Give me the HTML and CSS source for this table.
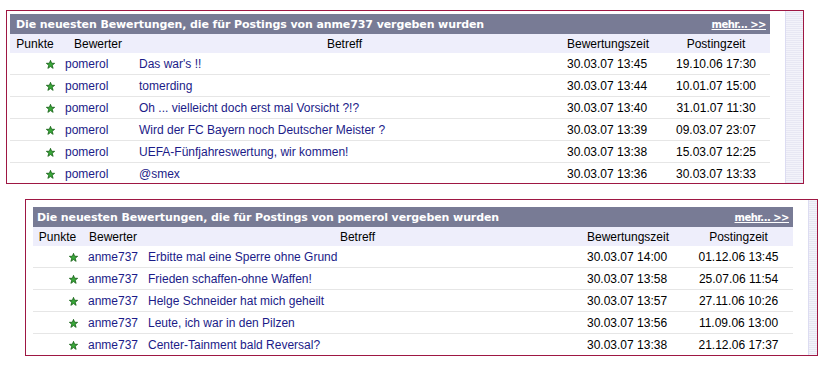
FILE: index.html
```html
<!DOCTYPE html>
<html lang="de">
<head>
<meta charset="utf-8">
<title>Bewertungen</title>
<link rel="stylesheet" href="styles.css">
</head>
<body>
<svg width="0" height="0" class="defs">
  <defs>
    <symbol id="star" viewBox="0 0 10 10">
      <polygon points="5,0.4 6.2,3.6 9.6,3.7 6.9,5.8 7.9,9.3 5,7.3 2.1,9.3 3.1,5.8 0.4,3.7 3.8,3.6" fill="#39a839" stroke="#155f15" stroke-width="0.9" stroke-linejoin="round"/>
    </symbol>
  </defs>
</svg>

<div class="box box-a">
  <div class="panel">
    <div class="titlebar">
      <span class="title">Die neuesten Bewertungen, die für Postings von anme737 vergeben wurden</span>
      <a class="more" href="#">mehr... &gt;&gt;</a>
    </div>
    <table class="list">
      <colgroup>
        <col class="a-c1"><col class="a-c2"><col class="a-c3"><col class="a-c4"><col class="a-c5">
      </colgroup>
      <thead>
        <tr>
          <th class="h-pkt">Punkte</th>
          <th class="h-bew">Bewerter</th>
          <th class="h-betr">Betreff</th>
          <th class="h-zeit">Bewertungszeit</th>
          <th class="h-post">Postingzeit</th>
        </tr>
      </thead>
      <tbody>
        <tr><td class="pkt"><svg class="star"><use href="#star"/></svg></td><td class="user">pomerol</td><td class="subj">Das war's !!</td><td class="zeit">30.03.07 13:45</td><td class="post">19.10.06 17:30</td></tr>
        <tr><td class="pkt"><svg class="star"><use href="#star"/></svg></td><td class="user">pomerol</td><td class="subj">tomerding</td><td class="zeit">30.03.07 13:44</td><td class="post">10.01.07 15:00</td></tr>
        <tr><td class="pkt"><svg class="star"><use href="#star"/></svg></td><td class="user">pomerol</td><td class="subj">Oh ... vielleicht doch erst mal Vorsicht ?!?</td><td class="zeit">30.03.07 13:40</td><td class="post">31.01.07 11:30</td></tr>
        <tr><td class="pkt"><svg class="star"><use href="#star"/></svg></td><td class="user">pomerol</td><td class="subj">Wird der FC Bayern noch Deutscher Meister ?</td><td class="zeit">30.03.07 13:39</td><td class="post">09.03.07 23:07</td></tr>
        <tr><td class="pkt"><svg class="star"><use href="#star"/></svg></td><td class="user">pomerol</td><td class="subj">UEFA-Fünfjahreswertung, wir kommen!</td><td class="zeit">30.03.07 13:38</td><td class="post">15.03.07 12:25</td></tr>
        <tr><td class="pkt"><svg class="star"><use href="#star"/></svg></td><td class="user">pomerol</td><td class="subj">@smex</td><td class="zeit">30.03.07 13:36</td><td class="post">30.03.07 13:33</td></tr>
      </tbody>
    </table>
  </div>
  <div class="stripe"></div>
</div>

<div class="box box-b">
  <div class="panel">
    <div class="titlebar">
      <span class="title">Die neuesten Bewertungen, die für Postings von pomerol vergeben wurden</span>
      <a class="more" href="#">mehr... &gt;&gt;</a>
    </div>
    <table class="list">
      <colgroup>
        <col class="b-c1"><col class="b-c2"><col class="b-c3"><col class="b-c4"><col class="b-c5">
      </colgroup>
      <thead>
        <tr>
          <th class="h-pkt">Punkte</th>
          <th class="h-bew">Bewerter</th>
          <th class="h-betr">Betreff</th>
          <th class="h-zeit">Bewertungszeit</th>
          <th class="h-post">Postingzeit</th>
        </tr>
      </thead>
      <tbody>
        <tr><td class="pkt"><svg class="star"><use href="#star"/></svg></td><td class="user">anme737</td><td class="subj">Erbitte mal eine Sperre ohne Grund</td><td class="zeit">30.03.07 14:00</td><td class="post">01.12.06 13:45</td></tr>
        <tr><td class="pkt"><svg class="star"><use href="#star"/></svg></td><td class="user">anme737</td><td class="subj">Frieden schaffen-ohne Waffen!</td><td class="zeit">30.03.07 13:58</td><td class="post">25.07.06 11:54</td></tr>
        <tr><td class="pkt"><svg class="star"><use href="#star"/></svg></td><td class="user">anme737</td><td class="subj">Helge Schneider hat mich geheilt</td><td class="zeit">30.03.07 13:57</td><td class="post">27.11.06 10:26</td></tr>
        <tr><td class="pkt"><svg class="star"><use href="#star"/></svg></td><td class="user">anme737</td><td class="subj">Leute, ich war in den Pilzen</td><td class="zeit">30.03.07 13:56</td><td class="post">11.09.06 13:00</td></tr>
        <tr><td class="pkt"><svg class="star"><use href="#star"/></svg></td><td class="user">anme737</td><td class="subj">Center-Tainment bald Reversal?</td><td class="zeit">30.03.07 13:38</td><td class="post">21.12.06 17:37</td></tr>
      </tbody>
    </table>
  </div>
  <div class="stripe"></div>
</div>
</body>
</html>
```

FILE: styles.css
```css
html, body {
  margin: 0;
  padding: 0;
  background: #ffffff;
}
body {
  font-family: "Liberation Sans", Arial, sans-serif;
  font-size: 12px;
  color: #000;
}
.defs {
  position: absolute;
  width: 0;
  height: 0;
  overflow: hidden;
}

.box {
  display: flex;
  border: 1px solid #9e1743;
  box-sizing: border-box;
}
.box-a {
  margin: 10px 0 0 6px;
  width: 798px;
  height: 174px;
  padding-left: 3px;
}
.box-a .panel {
  margin-top: 3px;
}
.box-b {
  margin: 15px 0 0 25px;
  width: 793px;
  padding-left: 7px;
}
.box-b .panel {
  margin-top: 7px;
}

.panel {
  width: 760px;
  flex: none;
  overflow: hidden;
}
.stripe {
  margin-left: 15px;
  flex: 1;
  border-left: 1px solid #dcdcf2;
  background: repeating-linear-gradient(to bottom, #f3f3fa 0, #f3f3fa 1px, #e7e7f3 1px, #e7e7f3 2px);
}

.titlebar {
  display: flex;
  justify-content: space-between;
  align-items: center;
  height: 20px;
  background: #787b95;
  padding: 0 4px 0 6px;
  color: #fff;
  font-family: "DejaVu Sans", Verdana, sans-serif;
  font-weight: bold;
  font-size: 11px;
}
.box-b .titlebar {
  padding-left: 4px;
}
.title {
  white-space: nowrap;
  letter-spacing: -0.1px;
}
.more {
  color: #fff;
  text-decoration: underline;
  white-space: nowrap;
  font-size: 10px;
  letter-spacing: -0.5px;
}

.list {
  width: 760px;
  border-collapse: collapse;
  table-layout: fixed;
}
.a-c1 { width: 50px; }
.a-c2 { width: 76px; }
.a-c3 { width: 427px; }
.a-c4 { width: 99px; }
.a-c5 { width: 108px; }
.b-c1 { width: 49px; }
.b-c2 { width: 62px; }
.b-c3 { width: 439px; }
.b-c4 { width: 101px; }
.b-c5 { width: 109px; }

.list th {
  background: #eeeefb;
  font-weight: normal;
  height: 19px;
  padding: 0;
  white-space: nowrap;
  text-align: center;
}
.list th.h-betr { padding-right: 10px; }
.box-b .list th.h-betr { padding-right: 12px; }
.list th.h-zeit { text-align: left; padding-left: 4px; }

.list td {
  height: 21px;
  padding: 0;
  white-space: nowrap;
  border-bottom: 1px solid #e6e6e6;
  vertical-align: middle;
}
.list tbody tr:last-child td {
  border-bottom: none;
}
.pkt {
  text-align: right;
  padding-right: 5px !important;
}
.box-b .pkt {
  padding-right: 4px !important;
}
.star {
  width: 9px;
  height: 9px;
  display: inline-block;
  vertical-align: -1px;
}
.user {
  color: #1b1b88;
  padding-left: 5px !important;
}
.box-b .user {
  padding-left: 6px !important;
}
.subj {
  color: #1b1b88;
  padding-left: 3px !important;
}
.box-b .subj {
  padding-left: 4px !important;
}
.zeit {
  padding-left: 4px !important;
}
.post {
  text-align: center;
}
```
